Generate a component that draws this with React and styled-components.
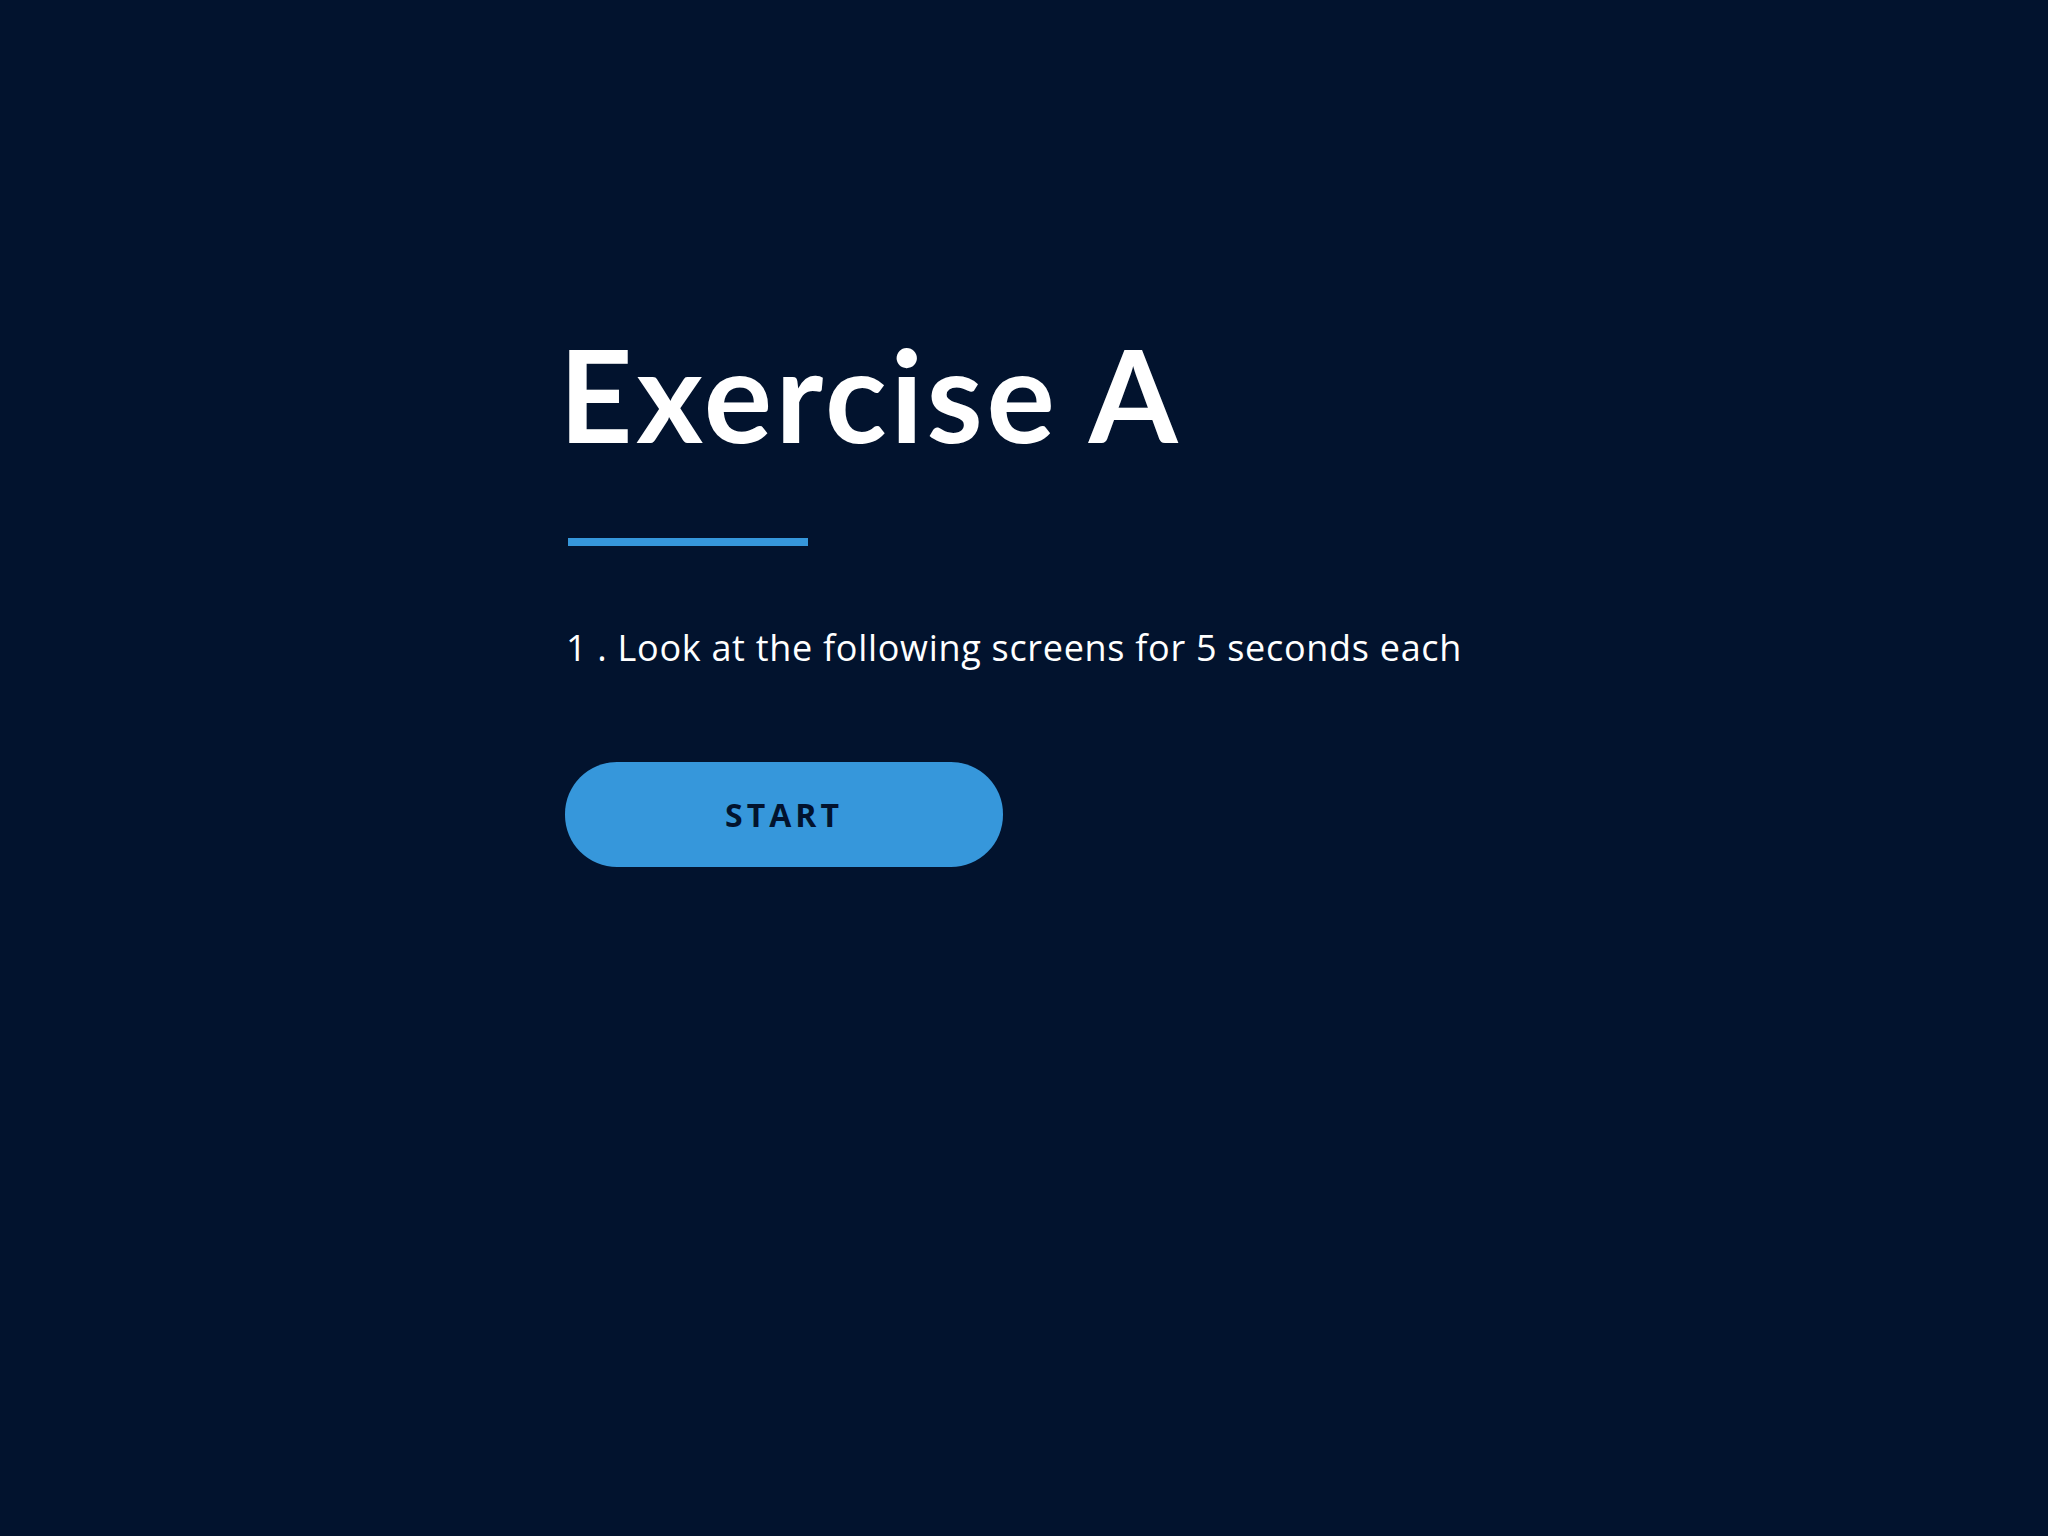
import React from "react"
import styled, { createGlobalStyle } from "styled-components"

const colors = {
  navy: "#02132e",
  blue: "#3697db",
  white: "#ffffff",
}

const GlobalStyle = createGlobalStyle`
  html, body {
    margin: 0;
    padding: 0;
    background: ${colors.navy};
  }
  #root {
    min-height: 100vh;
  }
`

const Page = styled.main`
  min-height: 100vh;
  background: ${colors.navy};
  display: flex;
  justify-content: center;
  box-sizing: border-box;
  padding-top: 317px;
`

const Column = styled.section`
  width: 920px;
  display: flex;
  flex-direction: column;
  align-items: flex-start;
`

const Title = styled.h1`
  margin: 0 0 0 -5px;
  font-family: "Lato", "Open Sans", sans-serif;
  font-weight: 700;
  font-size: 128px;
  line-height: 1.2;
  letter-spacing: 3.6px;
  color: ${colors.white};
`

const Rule = styled.div`
  width: 240px;
  height: 8px;
  margin: 67px 0 0 4px;
  background: ${colors.blue};
`

const Instruction = styled.p`
  margin: 80px 0 0 2px;
  font-family: "Open Sans", sans-serif;
  font-weight: 400;
  font-size: 36px;
  line-height: 1.2;
  letter-spacing: 0.7px;
  color: ${colors.white};
`

const StartButton = styled.button`
  margin: 93px 0 0 1px;
  width: 438px;
  height: 105px;
  border: none;
  border-radius: 52px;
  background: ${colors.blue};
  color: ${colors.navy};
  font-family: "Open Sans", sans-serif;
  font-weight: 700;
  font-size: 32px;
  letter-spacing: 4px;
  cursor: pointer;
`

export default function App() {
  return (
    <>
      <GlobalStyle />
      <Page>
        <Column>
          <Title>Exercise A</Title>
          <Rule />
          <Instruction>1 . Look at the following screens for 5 seconds each</Instruction>
          <StartButton>START</StartButton>
        </Column>
      </Page>
    </>
  )
}
